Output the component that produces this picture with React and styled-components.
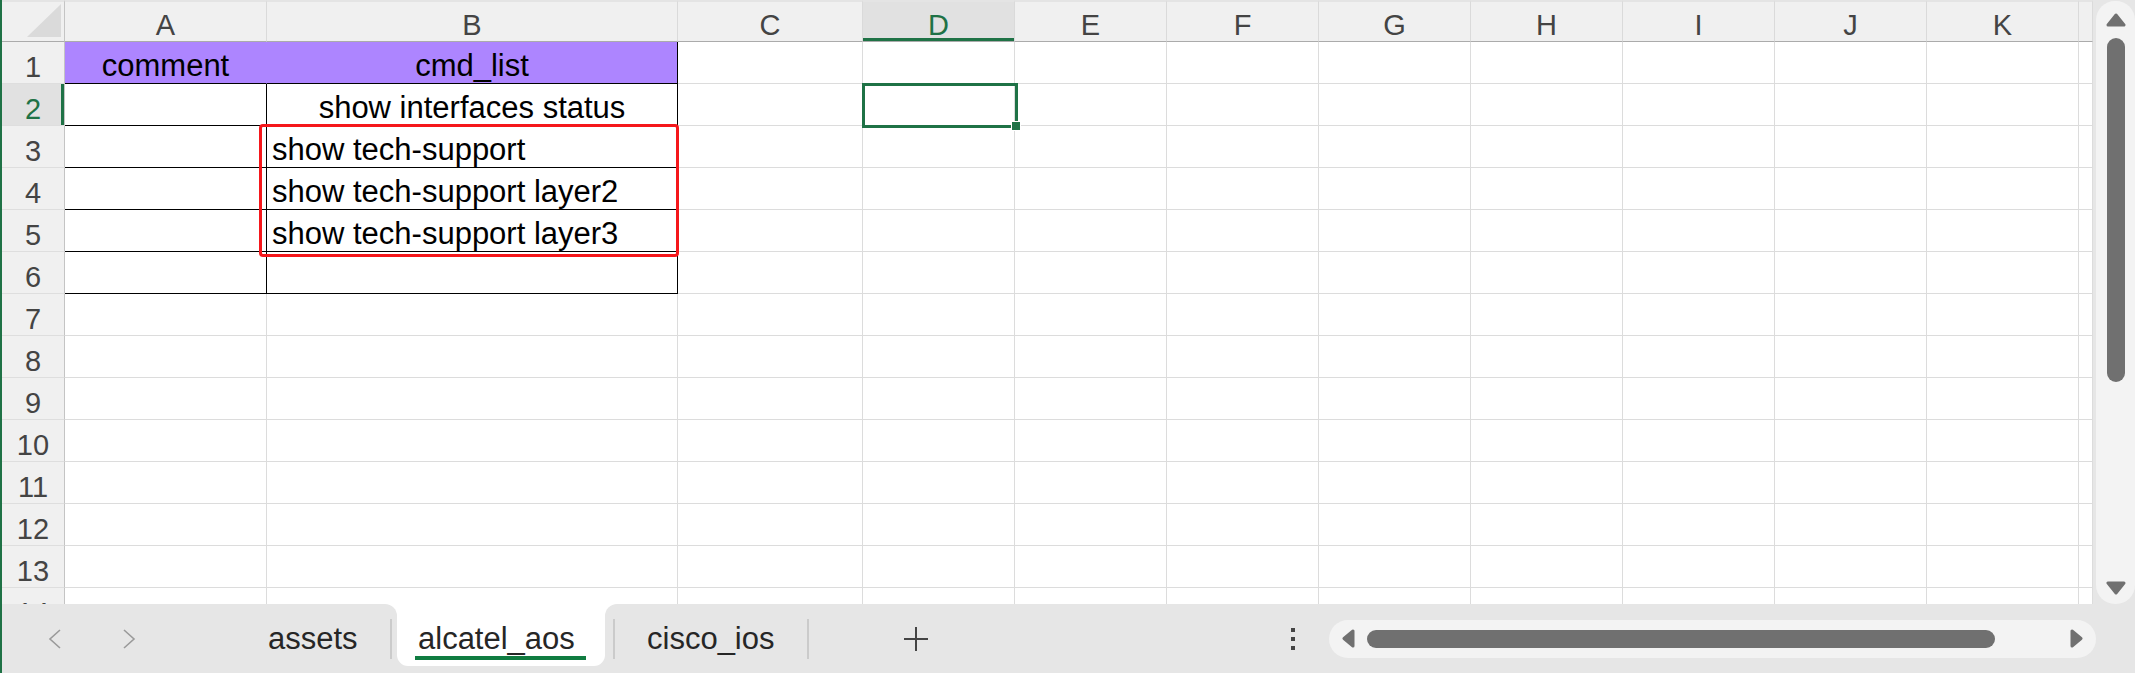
import styled, { createGlobalStyle } from 'styled-components';

const GlobalStyle = createGlobalStyle`
  *, *::before, *::after { box-sizing: border-box; }
  html, body { margin: 0; padding: 0; }
  body {
    background: #fff;
    font-family: "Liberation Sans", Arial, sans-serif;
    overflow: hidden;
  }
`;

const GREEN = '#1f7246';
const PURPLE = '#ad85ff';
const GRID = '#dcdcdc';

const COLUMNS = ['A', 'B', 'C', 'D', 'E', 'F', 'G', 'H', 'I', 'J', 'K', ''];
const SELECTED_COL = 'D';
const SELECTED_ROW = 2;

// cell content for columns A and B, rest are empty
const ROWS = [
  { A: 'comment', B: 'cmd_list', header: true },
  { A: '', B: 'show interfaces status', center: true, boxed: true },
  { A: '', B: 'show tech-support', boxed: true },
  { A: '', B: 'show tech-support layer2', boxed: true },
  { A: '', B: 'show tech-support layer3', boxed: true },
  { A: '', B: '', boxed: true },
  {}, {}, {}, {}, {}, {}, {}, {},
];

const Frame = styled.div`
  width: 2135px;
  height: 673px;
  display: flex;
  flex-direction: column;
  border-left: 2px solid ${GREEN};
  background: #fff;
`;

const Main = styled.div`
  display: flex;
  height: 604px;
  flex: none;
`;

const Sheet = styled.div`
  position: relative;
  width: 2091px;
  flex: none;
  overflow: hidden;
  display: grid;
  grid-template-columns: 63px 202px 411px 185px repeat(8, 152px) 14px;
  grid-auto-rows: 42px;
  align-content: start;
`;

const Corner = styled.div`
  display: flex;
  justify-content: flex-end;
  align-items: flex-end;
  padding: 0 3px 4px 0;
  background: #f0f0f0;
  border-top: 2px solid #e4e4e4;
  border-right: 1px solid #c4c4c4;
  border-bottom: 1px solid #ababab;
`;

const CornerTriangle = styled.div`
  width: 34px;
  height: 33px;
  background: #dadada;
  clip-path: polygon(100% 0, 100% 100%, 0 100%);
`;

const ColHeader = styled.div`
  display: flex;
  justify-content: center;
  align-items: flex-end;
  background: ${p => (p.$selected ? '#e1e1e1' : '#f0f0f0')};
  color: ${p => (p.$selected ? GREEN : '#444')};
  border-top: 2px solid #e4e4e4;
  border-right: 1px solid #dadada;
  border-bottom: 1px solid #ababab;
  box-shadow: ${p => (p.$selected ? `inset 0 -3px 0 ${GREEN}` : 'none')};
  font-size: 29px;
  line-height: 31px;
`;

const RowHeader = styled.div`
  display: flex;
  justify-content: center;
  align-items: flex-end;
  background: ${p => (p.$selected ? '#e1e1e1' : '#f0f0f0')};
  color: ${p => (p.$selected ? GREEN : '#444')};
  border-right: 1px solid #c4c4c4;
  border-bottom: 1px solid #dedede;
  box-shadow: ${p => (p.$selected ? `inset -3px 0 0 ${GREEN}` : 'none')};
  font-size: 29px;
  line-height: 32px;
`;

const Cell = styled.div`
  display: flex;
  align-items: flex-end;
  justify-content: ${p => (p.$center ? 'center' : 'flex-start')};
  padding-left: ${p => (p.$center ? 0 : 5)}px;
  background: ${p => p.$fill || '#fff'};
  border-right: 1px solid ${p => p.$right || GRID};
  border-bottom: 1px solid ${p => p.$bottom || GRID};
  font-size: 31px;
  line-height: 34px;
  color: #000;
  white-space: nowrap;
  overflow: hidden;
`;

const RedBox = styled.div`
  position: absolute;
  left: 257px;
  top: 124px;
  width: 420px;
  height: 133px;
  border: 3px solid #f5171b;
  border-radius: 4px;
  pointer-events: none;
`;

const Selection = styled.div`
  position: absolute;
  left: 860px;
  top: 83px;
  width: 156px;
  height: 45px;
  border: 3px solid ${GREEN};
  pointer-events: none;
`;

const FillHandle = styled.div`
  position: absolute;
  right: -6px;
  bottom: -6px;
  width: 10px;
  height: 10px;
  background: ${GREEN};
  border: 1px solid #fff;
`;

const VScrollPanel = styled.div`
  flex: 1;
  background: #e6e6e6;
  padding: 1px 0 0 3px;
  display: flex;
`;

const VTrack = styled.div`
  flex: 1;
  background: #f3f3f3;
  border-radius: 19px;
  display: flex;
  flex-direction: column;
  align-items: center;
  padding: 12px 0 9px;
`;

const VThumb = styled.div`
  width: 18px;
  height: 344px;
  margin-top: 11px;
  border-radius: 9px;
  background: #707070;
`;

const Spacer = styled.div`
  flex: 1;
`;

const TabBar = styled.div`
  height: 69px;
  flex: none;
  display: flex;
  background: linear-gradient(to bottom, #fff 0 30px, #e6e6e6 30px);
`;

const LeftSegment = styled.div`
  width: 395px;
  flex: none;
  display: flex;
  align-items: center;
  padding-left: 46px;
  background: #e6e6e6;
  border-top-right-radius: 12px;
`;

const RightSegment = styled.div`
  flex: 1;
  display: flex;
  align-items: center;
  padding: 0 39px 0 8px;
  background: #e6e6e6;
  border-top-left-radius: 12px;
`;

const NavButton = styled.div`
  width: 14px;
  height: 20px;
  flex: none;
  margin-right: ${p => p.$gap || 0}px;
  display: flex;
`;

const SheetTab = styled.div`
  align-self: stretch;
  padding: 17px 32px 0;
  font-size: 31px;
  line-height: 36px;
  color: #262626;
  white-space: nowrap;
`;

const ActiveTab = styled.div`
  position: relative;
  width: 208px;
  height: 62px;
  flex: none;
  padding: 17px 0 0 21px;
  background: #fff;
  border-radius: 0 0 11px 11px;
  font-size: 31px;
  line-height: 36px;
  color: #262626;
  white-space: nowrap;

  &::after {
    content: '';
    position: absolute;
    left: 18px;
    right: 19px;
    bottom: 6px;
    height: 4px;
    background: #107c41;
  }
`;

const Separator = styled.div`
  width: 2px;
  height: 40px;
  flex: none;
  background: #cbcbcb;
`;

const IconButton = styled.div`
  display: flex;
  justify-content: center;
  align-items: center;
  width: ${p => p.$w}px;
  margin-left: ${p => p.$ml || 0};
  margin-right: ${p => p.$mr || 0}px;
`;

const HTrack = styled.div`
  width: 767px;
  height: 38px;
  flex: none;
  display: flex;
  align-items: center;
  padding: 0 12px;
  background: #f3f3f3;
  border-radius: 19px;
`;

const HThumb = styled.div`
  width: 628px;
  height: 18px;
  margin-left: 12px;
  border-radius: 9px;
  background: #707070;
`;

const Arrow = ({ dir }) => {
  const pts = {
    up: '10,2 18,12 2,12',
    down: '2,2 18,2 10,12',
    left: '12,2 12,17 3,9.5',
    right: '2,2 2,17 11,9.5',
  }[dir];
  const vertical = dir === 'up' || dir === 'down';
  return (
    <svg width={vertical ? 20 : 14} height={vertical ? 14 : 19} viewBox={vertical ? '0 0 20 14' : '0 0 14 19'}>
      <polygon points={pts} fill="#707070" stroke="#707070" strokeWidth="3" strokeLinejoin="round" />
    </svg>
  );
};

const Chevron = ({ left }) => (
  <svg width="14" height="20" viewBox="0 0 14 20">
    <polyline
      points={left ? '12,1 2,10 12,19' : '2,1 12,10 2,19'}
      fill="none"
      stroke="#9a9a9a"
      strokeWidth="1.6"
    />
  </svg>
);

function App() {
  return (
    <>
      <GlobalStyle />
      <Frame>
        <Main>
          <Sheet>
            <Corner>
              <CornerTriangle />
            </Corner>
            {COLUMNS.map((c, i) => (
              <ColHeader key={i} $selected={c === SELECTED_COL}>{c}</ColHeader>
            ))}

            {ROWS.map((row, r) => {
              const n = r + 1;
              return [
                <RowHeader key={`h${n}`} $selected={n === SELECTED_ROW}>{n}</RowHeader>,
                ...COLUMNS.map((c, i) => {
                  if (c === 'A' || c === 'B') {
                    const text = row[c] || '';
                    if (row.header) {
                      return (
                        <Cell
                          key={`${n}${c}`}
                          $center
                          $fill={PURPLE}
                          $right={c === 'A' ? PURPLE : '#000'}
                          $bottom="#000"
                        >
                          {text}
                        </Cell>
                      );
                    }
                    return (
                      <Cell
                        key={`${n}${c}`}
                        $center={row.center}
                        $right={row.boxed ? '#000' : undefined}
                        $bottom={row.boxed ? '#000' : undefined}
                      >
                        {text}
                      </Cell>
                    );
                  }
                  return <Cell key={`${n}${i}`} />;
                }),
              ];
            })}

            <RedBox />
            <Selection>
              <FillHandle />
            </Selection>
          </Sheet>

          <VScrollPanel>
            <VTrack>
              <Arrow dir="up" />
              <VThumb />
              <Spacer />
              <Arrow dir="down" />
            </VTrack>
          </VScrollPanel>
        </Main>

        <TabBar>
          <LeftSegment>
            <NavButton $gap={60}><Chevron left /></NavButton>
            <NavButton $gap={100}><Chevron /></NavButton>
            <SheetTab>assets</SheetTab>
            <Separator />
          </LeftSegment>
          <ActiveTab>alcatel_aos</ActiveTab>
          <RightSegment>
            <Separator />
            <SheetTab>cisco_ios</SheetTab>
            <Separator />
            <IconButton $w={64} $ml="75px">
              <svg width="26" height="26" viewBox="0 0 26 26">
                <path d="M13 1v24M1 13h24" stroke="#444" strokeWidth="2" />
              </svg>
            </IconButton>
            <IconButton $w={24} $ml="auto" $mr={24}>
              <svg width="6" height="24" viewBox="0 0 6 24">
                <rect x="1" y="1" width="4" height="4" fill="#444" />
                <rect x="1" y="10" width="4" height="4" fill="#444" />
                <rect x="1" y="19" width="4" height="4" fill="#444" />
              </svg>
            </IconButton>
            <HTrack>
              <Arrow dir="left" />
              <HThumb />
              <Spacer />
              <Arrow dir="right" />
            </HTrack>
          </RightSegment>
        </TabBar>
      </Frame>
    </>
  );
}

export default App;
